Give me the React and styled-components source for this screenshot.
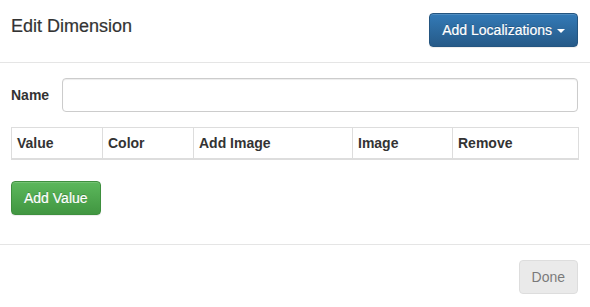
import React, { useState } from "react";
import styled, { createGlobalStyle } from "styled-components";

const GlobalStyle = createGlobalStyle`
  body {
    margin: 0;
    background: #fff;
    font-family: "Liberation Sans", Arial, sans-serif;
    font-size: 14px;
    color: #333;
  }
`;

const columns = [
  { label: "Value", width: 91 },
  { label: "Color", width: 91 },
  { label: "Add Image", width: 159 },
  { label: "Image", width: 100 },
  { label: "Remove", width: 126 },
];

const App = () => {
  const [name, setName] = useState("");

  return (
    <Modal>
      <GlobalStyle />
      <Header>
        <Title>Edit Dimension</Title>
        <Button variant="primary">
          Add Localizations <Caret />
        </Button>
      </Header>

      <Body>
        <FormRow>
          <Label htmlFor="name">Name</Label>
          <Input id="name" value={name} onChange={(e) => setName(e.target.value)} />
        </FormRow>

        <Table>
          <colgroup>
            {columns.map((c) => (
              <col key={c.label} style={{ width: c.width }} />
            ))}
          </colgroup>
          <thead>
            <tr>
              {columns.map((c) => (
                <th key={c.label}>{c.label}</th>
              ))}
            </tr>
          </thead>
        </Table>

        <Button variant="success">Add Value</Button>
      </Body>

      <Footer>
        <Button variant="default" disabled>
          Done
        </Button>
      </Footer>
    </Modal>
  );
};

const Modal = styled.div`
  width: 590px;
  height: 307px;
  background: #fff;
`;

const Header = styled.div`
  display: flex;
  justify-content: space-between;
  align-items: flex-start;
  padding: 13px 12px 15px 11px;
  border-bottom: 1px solid #e5e5e5;
`;

const Title = styled.h4`
  margin: 3px 0 0;
  font-size: 18px;
  font-weight: 500;
  line-height: 20px;
  color: #333;
  -webkit-text-stroke: 0.2px #333;
`;

const variants = {
  primary: `
    color: #fff;
    background-image: linear-gradient(to bottom, #337ab7 0, #265a88 100%);
    border-color: #245580;
    text-shadow: 0 -1px 0 rgba(0, 0, 0, 0.2);
    box-shadow: inset 0 1px 0 rgba(255, 255, 255, 0.15), 0 1px 1px rgba(0, 0, 0, 0.075);
    -webkit-text-stroke: 0.2px #fff;
  `,
  success: `
    color: #fff;
    background-image: linear-gradient(to bottom, #5cb85c 0, #419641 100%);
    border-color: #3e8f3e;
    text-shadow: 0 -1px 0 rgba(0, 0, 0, 0.2);
    box-shadow: inset 0 1px 0 rgba(255, 255, 255, 0.15), 0 1px 1px rgba(0, 0, 0, 0.075);
    -webkit-text-stroke: 0.2px #fff;
  `,
  default: `
    color: #333;
    background-color: #e0e0e0;
    border-color: #ccc;
  `,
};

const Button = styled.button`
  display: inline-flex;
  align-items: center;
  gap: 5px;
  height: 34px;
  padding: 6px 12px;
  font-family: inherit;
  font-size: 14px;
  line-height: 20px;
  border: 1px solid transparent;
  border-radius: 4px;
  cursor: pointer;
  ${({ variant }) => variants[variant]}

  &:disabled {
    cursor: not-allowed;
    opacity: 0.65;
    box-shadow: none;
  }
`;

const Caret = styled.span`
  display: inline-block;
  width: 0;
  height: 0;
  border-top: 4px solid #fff;
  border-left: 4px solid transparent;
  border-right: 4px solid transparent;
  margin-top: 1px;
`;

const Body = styled.div`
  padding: 15px 12px 29px 11px;
  border-bottom: 1px solid #e5e5e5;
`;

const FormRow = styled.div`
  display: flex;
  align-items: center;
  gap: 10px;
  margin-bottom: 15px;
`;

const Label = styled.label`
  width: 41px;
  font-weight: bold;
  font-size: 14px;
`;

const Input = styled.input`
  flex: 1;
  height: 34px;
  box-sizing: border-box;
  padding: 6px 12px;
  font-family: inherit;
  font-size: 14px;
  border: 1px solid #ccc;
  border-radius: 4px;
  box-shadow: inset 0 1px 1px rgba(0, 0, 0, 0.075);
  outline: none;
`;

const Table = styled.table`
  width: 567px;
  table-layout: fixed;
  border-collapse: collapse;
  border: 1px solid #ddd;
  margin-bottom: 21px;

  th {
    text-align: left;
    font-weight: bold;
    padding: 6px 5px;
    line-height: 18px;
    border: 1px solid #ddd;
    border-bottom-width: 2px;
  }
`;

const Footer = styled.div`
  display: flex;
  justify-content: flex-end;
  padding: 15px 12px 14px;
`;

export default App;
